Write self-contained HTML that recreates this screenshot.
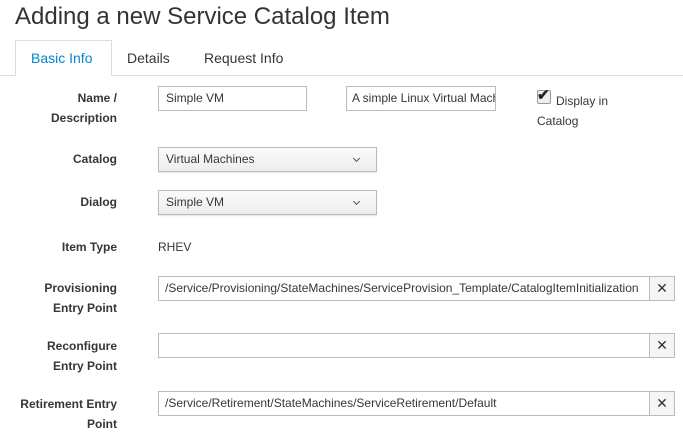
<!DOCTYPE html>
<html><head><style>
body{margin:0;width:683px;height:437px;background:#fff;font-family:"Liberation Sans",sans-serif;color:#363636;position:relative;overflow:hidden;font-size:12px}
.a{position:absolute;white-space:nowrap}
.lbl{position:absolute;right:566px;text-align:right;font-weight:bold;color:#363636;line-height:20px}
.inp{position:absolute;border:1px solid #bbb;box-sizing:border-box;height:25px;line-height:23px;padding-left:7px;overflow:hidden;white-space:nowrap;background:#fff}
.sel{position:absolute;border:1px solid #bbb;box-sizing:border-box;height:25px;line-height:23px;padding-left:7px;background:linear-gradient(#fafafa,#ededed);box-shadow:0 1px 1px rgba(0,0,0,.1)}
.sel:after{content:"";position:absolute;right:17px;top:8px;width:4px;height:4px;border-right:1px solid #555;border-bottom:1px solid #555;transform:rotate(45deg)}
.x{position:absolute;left:649px;width:26px;height:25px;box-sizing:border-box;border:1px solid #bbb;background:#f5f5f5;text-align:center;line-height:23px;font-size:14px;color:#333}
</style></head><body>
<div class="a" style="left:15px;top:3px;font-size:24px;font-weight:300;color:#333">Adding a new Service Catalog Item</div>
<div class="a" style="left:0;top:75px;width:683px;height:1px;background:#ddd"></div>
<div class="a" style="left:15px;top:40px;width:97px;height:36px;border:1px solid #ddd;border-bottom:none;box-sizing:border-box;background:#fff"></div>
<div class="a" style="left:31px;top:50px;font-size:14px;color:#0088ce">Basic Info</div>
<div class="a" style="left:127px;top:50px;font-size:14px;color:#363636">Details</div>
<div class="a" style="left:204px;top:50px;font-size:14px;color:#363636">Request Info</div>

<div class="lbl" style="top:88px">Name /<br>Description</div>
<div class="inp" style="left:158px;top:86px;width:149px">Simple VM</div>
<div class="inp" style="left:346px;top:86px;width:150px;padding-left:5px">A simple Linux Virtual Machine</div>
<div class="a" style="left:537px;top:90px;width:14px;height:14px;border:1px solid #999;border-radius:2px;background:#eee;box-sizing:border-box"></div>
<div class="a" style="left:537px;top:86px;font-size:15px;font-weight:bold;color:#222">✔</div>
<div class="a" style="left:556px;top:94px">Display in</div>
<div class="a" style="left:537px;top:114px">Catalog</div>

<div class="lbl" style="top:149px">Catalog</div>
<div class="sel" style="left:158px;top:147px;width:219px">Virtual Machines</div>
<div class="lbl" style="top:192px">Dialog</div>
<div class="sel" style="left:158px;top:190px;width:219px">Simple VM</div>

<div class="lbl" style="top:237px">Item Type</div>
<div class="a" style="left:158px;top:240px">RHEV</div>

<div class="lbl" style="top:278px">Provisioning<br>Entry Point</div>
<div class="inp" style="left:158px;top:276px;width:492px;padding-left:6px">/Service/Provisioning/StateMachines/ServiceProvision_Template/CatalogItemInitialization</div>
<div class="x" style="top:276px">✕</div>

<div class="lbl" style="top:336px">Reconfigure<br>Entry Point</div>
<div class="inp" style="left:158px;top:333px;width:492px"></div>
<div class="x" style="top:333px">✕</div>

<div class="lbl" style="top:394px">Retirement Entry<br>Point</div>
<div class="inp" style="left:158px;top:391px;width:492px;padding-left:6px">/Service/Retirement/StateMachines/ServiceRetirement/Default</div>
<div class="x" style="top:391px">✕</div>
</body></html>
